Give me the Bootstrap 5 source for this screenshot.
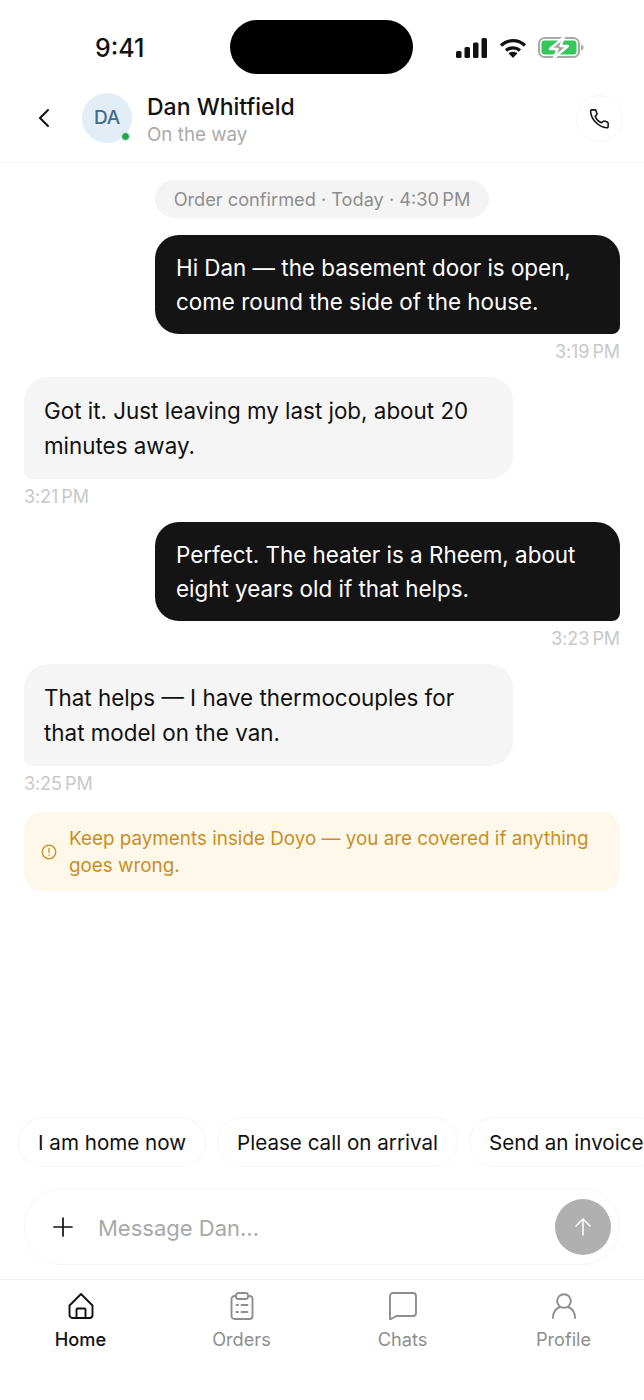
<!DOCTYPE html>
<html lang="en">
<head>
  <meta charset="UTF-8" />
  <meta name="viewport" content="width=device-width, initial-scale=1.0"/>
  <title>Chat with Dan</title>
  <link href="https://cdn.jsdelivr.net/npm/bootstrap@5.3.3/dist/css/bootstrap.min.css" rel="stylesheet">
  <style>
    html, body { height: 1400px; }
    body { font-family: Inter, "Liberation Sans", sans-serif; background: #fff; color: #111; overflow: hidden; }
    .phone { width: 644px; height: 1400px; overflow: hidden; }

    .status-bar { height: 80px; padding: 20px 60px 0 95px; }
    .clock { font-size: 25px; font-weight: 500; line-height: 56px; width: 135px; }
    .island { width: 184px; height: 54px; background: #000; border-radius: 27px; }
    .status-icons { height: 55px; margin-left: 43px; }
    .signal-icon { margin-right: 11px; }
    .battery-icon { margin-left: 11px; }

    .chat-head { height: 83px; padding: 0 21px 6px 36px; border-bottom: 1px solid #f4f4f4; }
    .avatar { width: 50px; height: 50px; margin-left: 30px; border-radius: 50%; background: #e3edf5; color: #3d6a92; font-size: 19px; font-weight: 500; letter-spacing: -.3px; }
    .online-dot { position: absolute; right: 2px; bottom: 2px; width: 9px; height: 9px; border-radius: 50%; background: #1fa64f; border: 1px solid #e3edf5; }
    .head-text { margin: 6px 0 0 15px; }
    .head-name { font-size: 23px; font-weight: 500; line-height: 28px; }
    .head-status { font-size: 18.8px; color: #aaa; line-height: 28px; }
    .call-btn { width: 47px; height: 47px; border-radius: 50%; border: 1px solid #f4f4f4; }

    .thread { padding: 17px 24px 0; }
    .order-pill { background: #f4f4f4; color: #8e8e8e; font-size: 18.2px; line-height: 38px; padding: 0 19px; border-radius: 19px; margin-bottom: 2px; }
    .bubble { font-size: 22.4px; line-height: 34px; }
    .bubble-out { background: #141414; color: #fff; border-radius: 24px 24px 8px 24px; margin-top: 15px; width: 465px; height: 99px; padding: 16px 21px 0; }
    .bubble-in { background: #f5f5f5; color: #111; border-radius: 24px 24px 24px 8px; width: 489px; height: 102px; margin-top: 15px; padding: 16px 20px 0; line-height: 35px; }
    .stamp { font-size: 18px; color: #c8c8c8; line-height: 20px; margin-top: 8px; letter-spacing: -.1px; }
    .safety-note { background: #fef8eb; color: #c98f1e; font-size: 18.85px; line-height: 27px; border-radius: 18px; padding: 13px 20px 12px 17px; margin-top: 18px; gap: 12px; }

    .quick-row { padding-left: 18px; gap: 11px; overflow: hidden; margin-bottom: 21px; }
    .quick-chip { flex: none; height: 50px; line-height: 50px; padding: 0 19px; font-size: 20.6px; border: 1px solid #f4f4f4; border-radius: 25px; }
    .composer { height: 77px; margin: 0 24px 14px; border: 1px solid #f4f4f4; border-radius: 38px; padding: 0 8px 0 27px; }
    .composer-hint { font-size: 22px; color: #a8a8a8; margin-left: 24px; padding-top: 3px; }
    .send-btn { width: 56px; height: 56px; border-radius: 50%; background: #b0b0b0; }

    .tabbar { height: 121px; border-top: 1px solid #f0f0f0; padding-top: 12px; }
    .tab-item { width: 161px; color: #8e8e8e; font-size: 18.2px; line-height: 24px; gap: 7px; }
    .tab-icon { height: 28px; }
    .tab-item.active-tab { color: #111; font-weight: 500; }
  </style>
</head>
<body>
  <div class="phone d-flex flex-column">
    <!-- Status bar -->
    <div class="status-bar d-flex align-items-start">
      <div class="clock">9:41</div>
      <div class="island"></div>
      <div class="status-icons d-flex align-items-center">
        <svg class="signal-icon" width="32" height="20" viewBox="0 0 32 20" fill="#111"><rect x="0" y="13" width="5.5" height="7" rx="1.5"/><rect x="8.5" y="9" width="5.5" height="11" rx="1.5"/><rect x="17" y="4.5" width="5.5" height="15.5" rx="1.5"/><rect x="25.5" y="0" width="5.5" height="20" rx="1.5"/></svg>
        <svg width="28" height="20" viewBox="0 0 28 20" fill="none" stroke="#111" stroke-width="3.2"><path d="M2 7.5C9 1 19 1 26 7.5"/><path d="M7 12.5c4-3.6 10-3.6 14 0"/><path d="M14 20l-4.5-4.8c2.5-2 6.5-2 9 0z" fill="#111" stroke="none"/></svg>
        <svg class="battery-icon" width="46" height="21" viewBox="0 0 46 21"><rect x="1" y="1" width="40" height="19" rx="5.5" fill="none" stroke="#a9a9a9" stroke-width="2"/><rect x="3.5" y="3.5" width="35" height="14" rx="3" fill="#34c759"/><path d="M43 7.5v6c1.5-.5 2.5-1.500 2.500-3S44.500 8 43 7.500z" fill="#a9a9a9"/><path d="M26 0 12 12h7.500L16 21 30 9h-7.500z" fill="#a3a7a4" stroke="#fff" stroke-width="2.400" stroke-linejoin="round"/></svg>
      </div>
    </div>

    <!-- Chat header -->
    <div class="chat-head d-flex align-items-center">
      <svg width="16" height="22" viewBox="0 0 16 22" fill="none" stroke="#111" stroke-width="2" stroke-linecap="round" stroke-linejoin="round"><path d="M12 3 4 11l8 8"/></svg>
      <div class="avatar position-relative d-flex align-items-center justify-content-center">DA<span class="online-dot"></span></div>
      <div class="head-text flex-grow-1">
        <div class="head-name">Dan Whitfield</div>
        <div class="head-status">On the way</div>
      </div>
      <div class="call-btn d-flex align-items-center justify-content-center">
        <svg width="23" height="23" viewBox="0 0 24 24" fill="none" stroke="#111" stroke-width="1.6" stroke-linejoin="round"><path d="M4 3h3.200c.6 0 1 .3 1.200.9l.9 3c.2.6 0 1.100-.4 1.500L7.500 9.800c1.200 3.100 3.500 5.500 6.700 6.700l1.400-1.400c.4-.4.9-.6 1.500-.4l3 .9c.6.2.9.6.9 1.200V20.500c0 .8-.6 1.300-1.400 1.200C11 21 3 13 2.700 4.300 2.700 3.600 3.200 3 4 3z"/></svg>
      </div>
    </div>

    <!-- Messages -->
    <div class="thread flex-grow-1">
      <div class="text-center"><span class="order-pill d-inline-block">Order confirmed · Today · 4:30&thinsp;PM</span></div>

      <div class="bubble bubble-out ms-auto">Hi Dan — the basement door is open, come round the side of the house.</div>
      <div class="stamp text-end">3:19&thinsp;PM</div>

      <div class="bubble bubble-in">Got it. Just leaving my last job, about 20 minutes away.</div>
      <div class="stamp">3:21&thinsp;PM</div>

      <div class="bubble bubble-out ms-auto">Perfect. The heater is a Rheem, about eight years old if that helps.</div>
      <div class="stamp text-end">3:23&thinsp;PM</div>

      <div class="bubble bubble-in">That helps — I have thermocouples for that model on the van.</div>
      <div class="stamp">3:25&thinsp;PM</div>

      <div class="safety-note d-flex align-items-center">
        <svg class="flex-shrink-0" width="16" height="16" viewBox="0 0 16 16" fill="none" stroke="#c98f1e" stroke-width="1.300" stroke-linecap="round"><circle cx="8" cy="8" r="6.800"/><path d="M8 4.500v4M8 11v.3"/></svg>
        <div>Keep payments inside Doyo — you are covered if anything goes wrong.</div>
      </div>
    </div>

    <!-- Quick replies -->
    <div class="quick-row d-flex">
      <div class="quick-chip">I am home now</div>
      <div class="quick-chip">Please call on arrival</div>
      <div class="quick-chip">Send an invoice</div>
    </div>

    <!-- Composer -->
    <div class="composer d-flex align-items-center">
      <svg width="22" height="22" viewBox="0 0 22 22" stroke="#111" stroke-width="1.700" stroke-linecap="round"><path d="M11 2v18M2 11h18"/></svg>
      <div class="composer-hint flex-grow-1">Message Dan...</div>
      <div class="send-btn d-flex align-items-center justify-content-center">
        <svg width="20" height="22" viewBox="0 0 20 22" fill="none" stroke="#fff" stroke-width="1.500" stroke-linecap="round" stroke-linejoin="round"><path d="M10 19V3M3 10l7-7 7 7"/></svg>
      </div>
    </div>

    <!-- Tab bar -->
    <div class="tabbar d-flex align-items-start">
      <div class="tab-item active-tab d-flex flex-column align-items-center">
        <svg class="tab-icon" width="26" height="28" viewBox="0 0 26 28" fill="none" stroke="#111" stroke-width="1.900" stroke-linejoin="round"><path d="M1.500 13.500 13 2l11.500 11.500V23a3 3 0 0 1-3 3h-17a3 3 0 0 1-3-3z"/><path d="M8.500 26V17.500a1 1 0 0 1 1-1h7a1 1 0 0 1 1 1V26"/></svg>
        <span>Home</span>
      </div>
      <div class="tab-item d-flex flex-column align-items-center">
        <svg class="tab-icon" width="24" height="28" viewBox="0 0 24 28" fill="none" stroke="#8e8e8e" stroke-width="1.900" stroke-linecap="round"><rect x="1.500" y="4" width="21" height="23" rx="3"/><rect x="6" y="1" width="12" height="6" rx="2.500" fill="#fff"/><path d="M6.500 13h1.500M11.500 13h6M6.500 20h1.500M11.500 20h6"/></svg>
        <span>Orders</span>
      </div>
      <div class="tab-item d-flex flex-column align-items-center">
        <svg class="tab-icon" width="28" height="28" viewBox="0 0 28 28" fill="none" stroke="#8e8e8e" stroke-width="1.900" stroke-linejoin="round"><path d="M1 4a3 3 0 0 1 3-3h20a3 3 0 0 1 3 3v17a3 3 0 0 1-3 3H7.500L1 27.500z"/></svg>
        <span>Chats</span>
      </div>
      <div class="tab-item d-flex flex-column align-items-center">
        <svg class="tab-icon" width="24" height="28" viewBox="0 0 24 28" fill="none" stroke="#8e8e8e" stroke-width="1.900" stroke-linecap="round"><circle cx="12" cy="9" r="6.800"/><path d="M1 26c0-6 3-9.500 7-11M23 26c0-6-3-9.500-7-11"/></svg>
        <span>Profile</span>
      </div>
    </div>
  </div>

  <script src="https://cdn.jsdelivr.net/npm/bootstrap@5.3.3/dist/js/bootstrap.bundle.min.js"></script>
</body>
</html>
